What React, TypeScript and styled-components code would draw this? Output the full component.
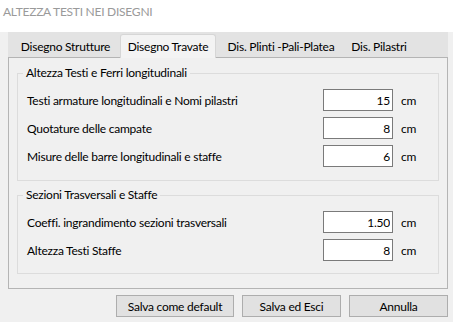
import styled, { createGlobalStyle } from 'styled-components';

const GlobalStyle = createGlobalStyle`
  html, body {
    margin: 0;
    padding: 0;
    background: #f0f0f0;
  }
  body {
    font-family: Lato, "Liberation Sans", sans-serif;
    font-size: 12px;
    letter-spacing: -0.25px;
    color: #000;
  }
  * { box-sizing: border-box; }
`;

interface Field {
  label: string;
  value: string;
}

const groups: { title: string; height: number; fields: Field[] }[] = [
  {
    title: 'Altezza Testi e Ferri longitudinali',
    height: 108,
    fields: [
      { label: 'Testi armature longitudinali e Nomi pilastri', value: '15' },
      { label: 'Quotature delle campate', value: '8' },
      { label: 'Misure delle barre longitudinali e staffe', value: '6' },
    ],
  },
  {
    title: 'Sezioni Trasversali e Staffe',
    height: 79,
    fields: [
      { label: 'Coeffi. ingrandimento sezioni trasversali', value: '1.50' },
      { label: 'Altezza Testi Staffe', value: '8' },
    ],
  },
];

const tabs = [
  { label: 'Disegno Strutture', width: 103 },
  { label: 'Disegno Travate', width: 96, active: true },
  { label: 'Dis. Plinti -Pali-Platea', width: 124 },
  { label: 'Dis. Pilastri', width: 66 },
];

const App = () => {
  return (
    <Window>
      <GlobalStyle />
      <TitleBar>ALTEZZA TESTI NEI DISEGNI</TitleBar>
      <Body>
        <TabStrip>
          {tabs.map((t) => (
            <Tab key={t.label} width={t.width} active={t.active}>
              {t.label}
            </Tab>
          ))}
        </TabStrip>
        <Panel>
          {groups.map((g) => (
            <Group key={g.title} height={g.height}>
              <GroupTitle>{g.title}</GroupTitle>
              {g.fields.map((f) => (
                <Row key={f.label}>
                  <Label>{f.label}</Label>
                  <Input readOnly value={f.value} />
                  <Unit>cm</Unit>
                </Row>
              ))}
            </Group>
          ))}
        </Panel>
        <Buttons>
          <Button width={118}>Salva come default</Button>
          <Button width={99}>Salva ed Esci</Button>
          <Button width={99}>Annulla</Button>
        </Buttons>
      </Body>
    </Window>
  );
};

export default App;

const Window = styled.div`
  width: 453px;
  height: 322px;
  background: #f0f0f0;
  display: flex;
  flex-direction: column;
  overflow: hidden;
`;

const TitleBar = styled.div`
  height: 32px;
  background: #ffffff;
  padding: 4px 3px 0;
  line-height: 16px;
  color: #9a9a9a;
  font-size: 12px;
`;

const Body = styled.div`
  padding: 0 5px 0 8px;
  display: flex;
  flex-direction: column;
`;

const TabStrip = styled.div`
  height: 25px;
  background: #e3e3e3;
  display: flex;
  align-items: flex-end;
  gap: 3px;
  padding-left: 6px;
`;

const Tab = styled.div<{ width: number; active?: boolean }>`
  width: ${(p) => p.width}px;
  height: 24px;
  display: flex;
  align-items: center;
  justify-content: center;
  white-space: nowrap;
  position: relative;
  z-index: 1;
  margin-bottom: -1px;
  border: 1px solid ${(p) => (p.active ? '#d6d6d6' : 'transparent')};
  border-bottom: none;
  border-radius: 3px 3px 0 0;
  background: ${(p) => (p.active ? '#f3f3f3' : 'transparent')};
`;

const Panel = styled.div`
  border: 1px solid #b4b4b4;
  padding: 15px 8px 14px;
  display: flex;
  flex-direction: column;
  gap: 14px;
`;

const Group = styled.div<{ height: number }>`
  position: relative;
  height: ${(p) => p.height}px;
  border: 1px solid #dcdcdc;
  padding: 15px 7px 0 9px;
  display: flex;
  flex-direction: column;
  gap: 6px;
`;

const GroupTitle = styled.div`
  position: absolute;
  top: -9px;
  left: 5px;
  padding: 0 3px;
  line-height: 16px;
  background: #f0f0f0;
  white-space: nowrap;
`;

const Row = styled.div`
  height: 22px;
  display: flex;
  align-items: center;
`;

const Label = styled.div`
  flex: 1;
  white-space: nowrap;
`;

const Input = styled.input`
  width: 70px;
  height: 22px;
  border: 1px solid #7a7a7a;
  background: #ffffff;
  padding: 0 2px;
  margin: 0;
  text-align: right;
  font: inherit;
  letter-spacing: inherit;
  color: #000;
  outline: none;
`;

const Unit = styled.div`
  width: 38px;
  padding-left: 8px;
`;

const Buttons = styled.div`
  margin-top: 6px;
  display: flex;
  justify-content: flex-end;
  gap: 8px;
`;

const Button = styled.button<{ width: number }>`
  width: ${(p) => p.width}px;
  height: 22px;
  margin: 0;
  padding: 0;
  background: #e1e1e1;
  border: 1px solid #adadad;
  font: inherit;
  letter-spacing: inherit;
  color: #000;
`;
